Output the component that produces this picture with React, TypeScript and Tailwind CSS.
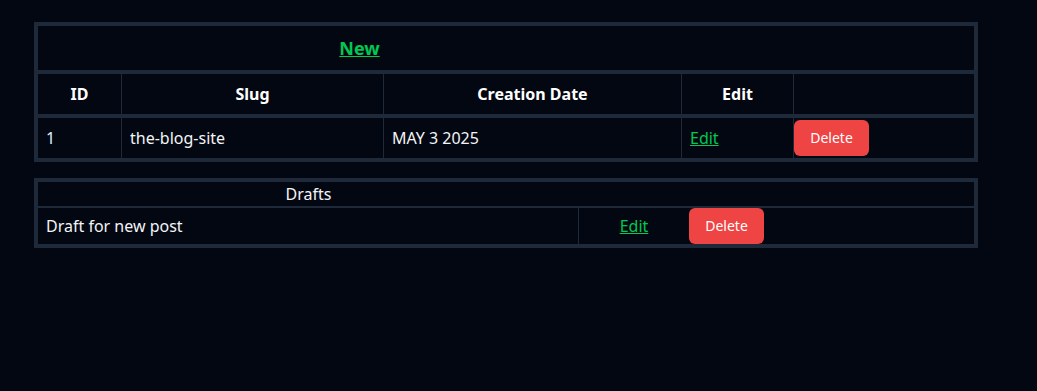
import React from 'react';

const posts = [{ id: 1, slug: 'the-blog-site', date: 'MAY 3 2025' }];
const drafts = [{ title: 'Draft for new post' }];

const DeleteButton: React.FC = () => (
  <button className="w-[75px] h-9 rounded-md bg-[#ef4444] text-white text-sm">Delete</button>
);

const App: React.FC = () => {
  return (
    <div className="min-h-screen w-full bg-gray-950 pt-[22px] pl-[34px] text-gray-100 font-['Noto_Sans',sans-serif]">
      {/* Posts table */}
      <div className="w-[944px] border-4 border-gray-800">
        <div className="flex h-[48px] border-b-4 border-gray-800">
          <div className="w-[643px] flex items-center justify-center">
            <a href="#" className="text-lg font-bold text-green-500 underline">New</a>
          </div>
        </div>
        <div className="flex h-[44px] border-b-4 border-gray-800 font-bold text-white">
          <div className="w-[84px] border-r border-gray-800 flex items-center justify-center">ID</div>
          <div className="w-[262px] border-r border-gray-800 flex items-center justify-center">Slug</div>
          <div className="w-[298px] border-r border-gray-800 flex items-center justify-center">Creation Date</div>
          <div className="w-[112px] border-r border-gray-800 flex items-center justify-center">Edit</div>
          <div className="flex-1"></div>
        </div>
        {posts.map((p) => (
          <div key={p.id} className="flex h-[40px]">
            <div className="w-[84px] border-r border-gray-800 flex items-center px-2 text-sky-100">{p.id}</div>
            <div className="w-[262px] border-r border-gray-800 flex items-center px-2">{p.slug}</div>
            <div className="w-[298px] border-r border-gray-800 flex items-center px-2">{p.date}</div>
            <div className="w-[112px] border-r border-gray-800 flex items-center px-2">
              <a href="#" className="text-green-500 underline">Edit</a>
            </div>
            <div className="flex-1 flex items-center">
              <DeleteButton />
            </div>
          </div>
        ))}
      </div>

      {/* Drafts table */}
      <div className="mt-4 w-[944px] border-4 border-gray-800">
        <div className="flex h-[26px] border-b-2 border-gray-800">
          <div className="w-[541px] flex items-center justify-center">Drafts</div>
        </div>
        {drafts.map((d) => (
          <div key={d.title} className="flex h-[36px]">
            <div className="w-[541px] border-r border-gray-800 flex items-center px-2">{d.title}</div>
            <div className="w-[110px] flex items-center justify-center">
              <a href="#" className="text-green-500 underline">Edit</a>
            </div>
            <div className="flex-1 flex items-center">
              <DeleteButton />
            </div>
          </div>
        ))}
      </div>
    </div>
  );
};

export default App;
